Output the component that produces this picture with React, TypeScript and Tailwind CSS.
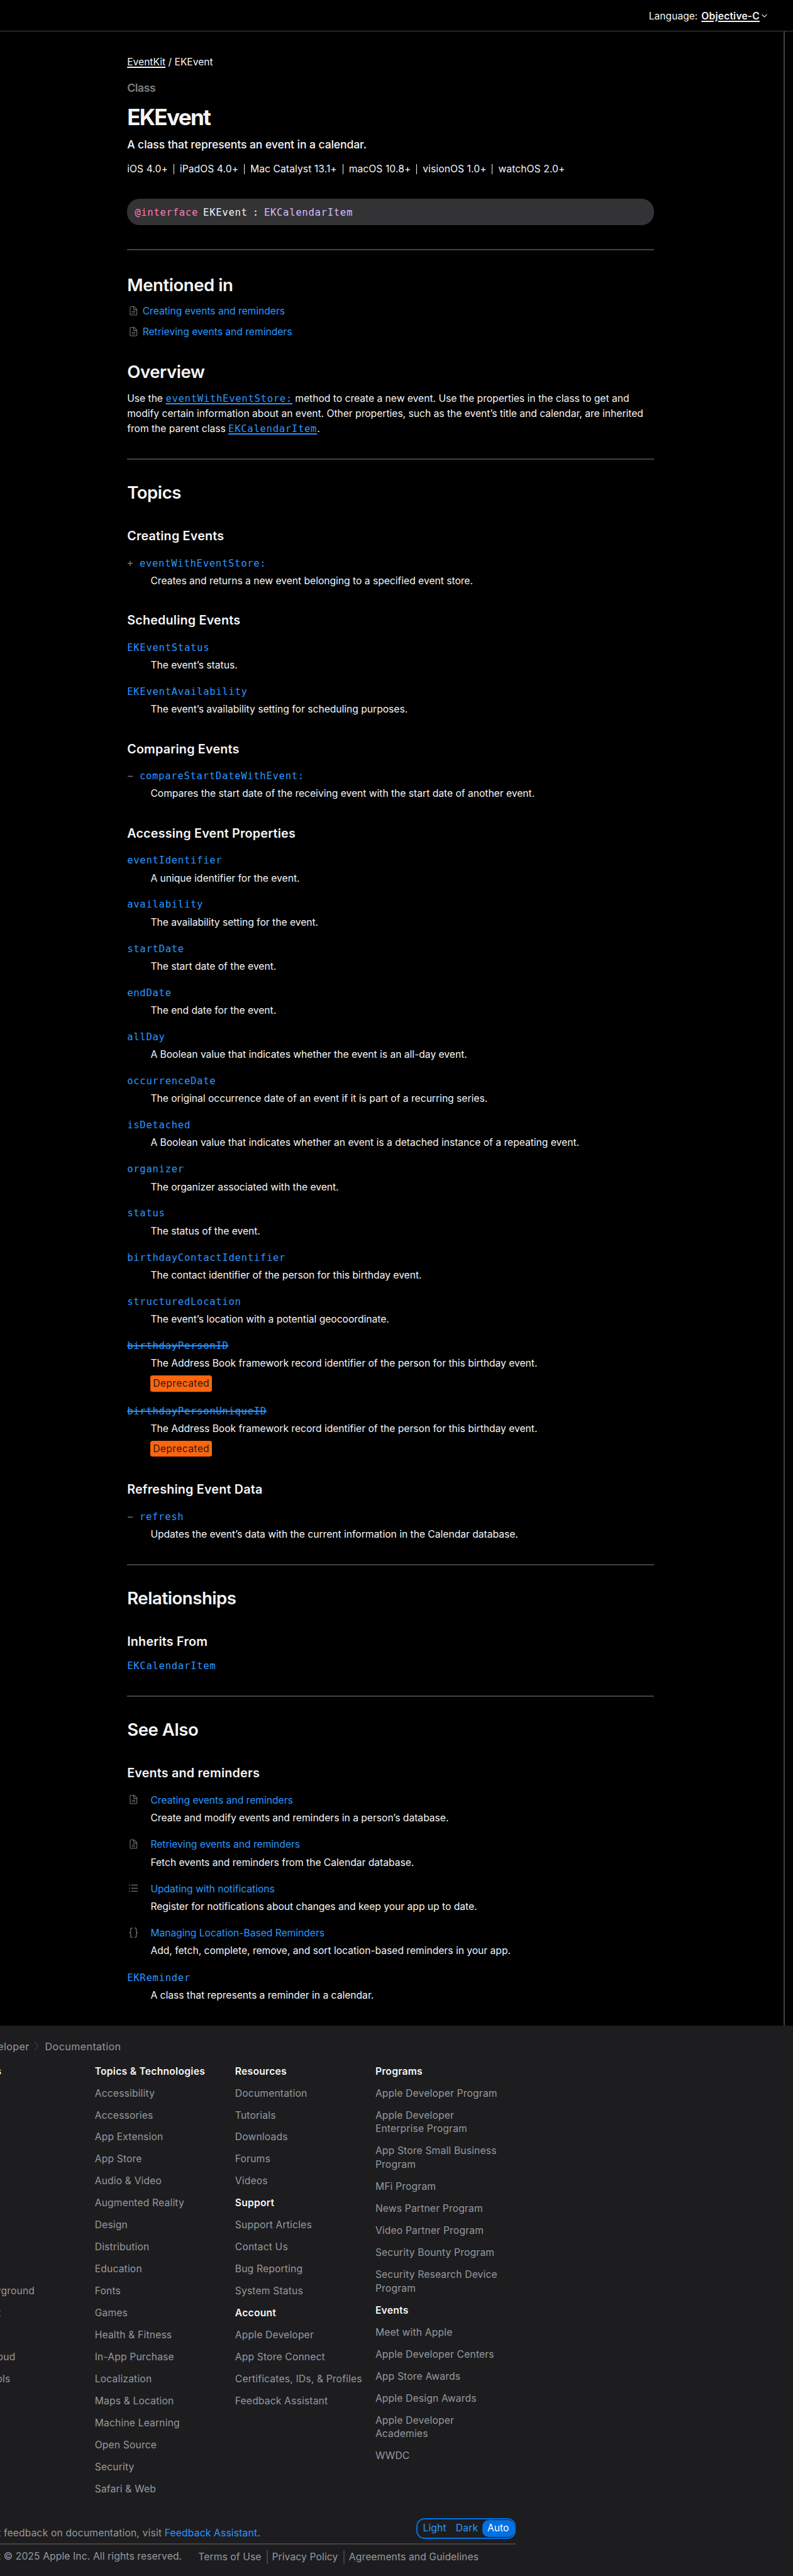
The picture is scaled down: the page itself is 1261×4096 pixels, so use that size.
import type { ReactNode } from "react";

type Item = {
  name: string;
  text: string;
  prefix?: string;
  deprecated?: boolean;
};

type Group = { title: string; items: Item[] };

const topics: Group[] = [
  {
    title: "Creating Events",
    items: [
      {
        prefix: "+",
        name: "eventWithEventStore:",
        text: "Creates and returns a new event belonging to a specified event store.",
      },
    ],
  },
  {
    title: "Scheduling Events",
    items: [
      { name: "EKEventStatus", text: "The event’s status." },
      {
        name: "EKEventAvailability",
        text: "The event’s availability setting for scheduling purposes.",
      },
    ],
  },
  {
    title: "Comparing Events",
    items: [
      {
        prefix: "−",
        name: "compareStartDateWithEvent:",
        text: "Compares the start date of the receiving event with the start date of another event.",
      },
    ],
  },
  {
    title: "Accessing Event Properties",
    items: [
      { name: "eventIdentifier", text: "A unique identifier for the event." },
      { name: "availability", text: "The availability setting for the event." },
      { name: "startDate", text: "The start date of the event." },
      { name: "endDate", text: "The end date for the event." },
      {
        name: "allDay",
        text: "A Boolean value that indicates whether the event is an all-day event.",
      },
      {
        name: "occurrenceDate",
        text: "The original occurrence date of an event if it is part of a recurring series.",
      },
      {
        name: "isDetached",
        text: "A Boolean value that indicates whether an event is a detached instance of a repeating event.",
      },
      { name: "organizer", text: "The organizer associated with the event." },
      { name: "status", text: "The status of the event." },
      {
        name: "birthdayContactIdentifier",
        text: "The contact identifier of the person for this birthday event.",
      },
      {
        name: "structuredLocation",
        text: "The event’s location with a potential geocoordinate.",
      },
      {
        name: "birthdayPersonID",
        text: "The Address Book framework record identifier of the person for this birthday event.",
        deprecated: true,
      },
      {
        name: "birthdayPersonUniqueID",
        text: "The Address Book framework record identifier of the person for this birthday event.",
        deprecated: true,
      },
    ],
  },
  {
    title: "Refreshing Event Data",
    items: [
      {
        prefix: "−",
        name: "refresh",
        text: "Updates the event’s data with the current information in the Calendar database.",
      },
    ],
  },
];

const platforms = [
  "iOS 4.0+",
  "iPadOS 4.0+",
  "Mac Catalyst 13.1+",
  "macOS 10.8+",
  "visionOS 1.0+",
  "watchOS 2.0+",
];

type Section = { heading: string; links: string[] };

const directory: Section[][] = [
  [
    {
      heading: "Platforms",
      links: ["iOS", "iPadOS", "macOS", "tvOS", "visionOS", "watchOS"],
    },
    {
      heading: "Tools",
      links: [
        "Swift",
        "SwiftUI",
        "Swift Playground",
        "TestFlight",
        "Xcode",
        "Xcode Cloud",
        "SF Symbols",
      ],
    },
  ],
  [
    {
      heading: "Topics & Technologies",
      links: [
        "Accessibility",
        "Accessories",
        "App Extension",
        "App Store",
        "Audio & Video",
        "Augmented Reality",
        "Design",
        "Distribution",
        "Education",
        "Fonts",
        "Games",
        "Health & Fitness",
        "In-App Purchase",
        "Localization",
        "Maps & Location",
        "Machine Learning",
        "Open Source",
        "Security",
        "Safari & Web",
      ],
    },
  ],
  [
    {
      heading: "Resources",
      links: ["Documentation", "Tutorials", "Downloads", "Forums", "Videos"],
    },
    {
      heading: "Support",
      links: ["Support Articles", "Contact Us", "Bug Reporting", "System Status"],
    },
    {
      heading: "Account",
      links: [
        "Apple Developer",
        "App Store Connect",
        "Certificates, IDs, & Profiles",
        "Feedback Assistant",
      ],
    },
  ],
  [
    {
      heading: "Programs",
      links: [
        "Apple Developer Program",
        "Apple Developer Enterprise Program",
        "App Store Small Business Program",
        "MFi Program",
        "News Partner Program",
        "Video Partner Program",
        "Security Bounty Program",
        "Security Research Device Program",
      ],
    },
    {
      heading: "Events",
      links: [
        "Meet with Apple",
        "Apple Developer Centers",
        "App Store Awards",
        "Apple Design Awards",
        "Apple Developer Academies",
        "WWDC",
      ],
    },
  ],
];

function DocIcon() {
  return (
    <svg
      viewBox="0 0 16 16"
      className="h-[14.6px] w-[14.6px] flex-none text-[#77777c]"
      fill="none"
      stroke="currentColor"
      strokeWidth="1.2"
      strokeLinejoin="round"
    >
      <path d="M3.9 0.6H9.2L13.9 5.3V13.6Q13.9 15.4 12.1 15.4H3.9Q2.1 15.4 2.1 13.6V2.4Q2.1 0.6 3.9 0.6Z" />
      <path d="M8.3 0.8V5.2Q8.3 6.2 9.3 6.2H13.7" />
      <path d="M4.9 9.3H11.1M4.9 12.1H11.1" />
    </svg>
  );
}

function ListIcon() {
  return (
    <svg
      viewBox="0 0 16 16"
      className="h-[14.6px] w-[14.6px] flex-none text-[#77777c]"
      stroke="currentColor"
      strokeWidth="1.4"
    >
      <path d="M0 2.7H1.9M0 8H1.9M0 13.3H1.9M4 2.7H16M4 8H16M4 13.3H16" />
    </svg>
  );
}

function BracesIcon() {
  return (
    <svg
      viewBox="0 0 16 18"
      className="h-[16.4px] w-[14.6px] flex-none text-[#77777c]"
      fill="none"
      stroke="currentColor"
      strokeWidth="1.4"
    >
      <path d="M6.3 0.7H5.6Q3.1 0.7 3.1 3V6.4Q3.1 9 0.6 9Q3.1 9 3.1 11.6V15Q3.1 17.3 5.6 17.3H6.3" />
      <path d="M9.7 0.7H10.4Q12.9 0.7 12.9 3V6.4Q12.9 9 15.4 9Q12.9 9 12.9 11.6V15Q12.9 17.3 10.4 17.3H9.7" />
    </svg>
  );
}

function Rule({ className }: { className: string }) {
  return <hr className={`h-[2px] border-0 bg-[#424245] ${className}`} />;
}

function H2({ className, children }: { className: string; children: ReactNode }) {
  return (
    <h2
      className={`text-[27.5px] leading-[36px] font-semibold tracking-[-0.015em] ${className}`}
    >
      {children}
    </h2>
  );
}

function H3({ className, children }: { className: string; children: ReactNode }) {
  return (
    <h3
      className={`text-[19.7px] leading-[28px] font-semibold tracking-[0.011em] ${className}`}
    >
      {children}
    </h3>
  );
}

function Code({ children, strike }: { children: ReactNode; strike?: boolean }) {
  return (
    <a
      className={
        strike
          ? "font-['DejaVu_Sans_Mono',monospace] text-[15.6px] tracking-[0.69px] text-[#2997ff] line-through decoration-2"
          : "font-['DejaVu_Sans_Mono',monospace] text-[15.6px] tracking-[0.69px] text-[#2997ff]"
      }
    >
      {children}
    </a>
  );
}

function InlineCode({ children }: { children: ReactNode }) {
  return (
    <a className="font-['DejaVu_Sans_Mono',monospace] text-[15.6px] leading-none tracking-[0.69px] text-[#2997ff] underline decoration-2 underline-offset-[2px]">
      {children}
    </a>
  );
}

function TopicItem({ item }: { item: Item }) {
  return (
    <div>
      <div className="flex h-[24px] font-['DejaVu_Sans_Mono',monospace] text-[15.6px] leading-[22.2px]">
        {item.prefix && (
          <span className="w-[19.7px] text-[#808084]">{item.prefix}</span>
        )}
        <Code strike={item.deprecated}>{item.name}</Code>
      </div>
      <p className="mt-[3.3px] pl-[37.2px]">{item.text}</p>
      {item.deprecated && (
        <span className="mt-[6.9px] mb-[1.3px] ml-[37.2px] flex h-[25.5px] w-[97.5px] items-center justify-center rounded-[3.5px] bg-[#ff650d] tracking-[0.024em] text-[#1d1d1f]">
          Deprecated
        </span>
      )}
    </div>
  );
}

function ArticleItem({
  icon,
  name,
  text,
}: {
  icon: ReactNode;
  name: string;
  text: string;
}) {
  return (
    <div>
      <div className="flex h-[24px]">
        <span className="flex h-[22px] w-[37.2px] items-center pl-[2.6px]">{icon}</span>
        <a className="text-[#2997ff]">{name}</a>
      </div>
      <p className="mt-[4.3px] pl-[37.2px]">{text}</p>
    </div>
  );
}

function MentionLink({ className, children }: { className: string; children: ReactNode }) {
  return (
    <div className={`flex h-[24px] ${className}`}>
      <span className="flex h-[22px] w-[24.5px] items-center pl-[2.6px]">
        <DocIcon />
      </span>
      <a className="text-[#2997ff]">{children}</a>
    </div>
  );
}

function Header() {
  return (
    <header className="flex h-[50px] items-center justify-end border-b border-[#424245] pt-[3px] pr-[41px]">
      <span>Language:</span>
      <span className="ml-[6px] font-semibold tracking-[0.012em] underline decoration-2 underline-offset-[2px]">
        Objective-C
      </span>
      <svg
        viewBox="0 0 9 6"
        className="ml-[3px] h-[6px] w-[9px] -translate-y-[1px]"
        fill="none"
        stroke="currentColor"
        strokeWidth="1.1"
      >
        <path d="M0.5 0.8L4.5 5L8.5 0.8" />
      </svg>
    </header>
  );
}

function Main() {
  return (
    <main className="h-[3171px] w-[1248px] border-r-2 border-[#424245] pt-[37.4px] pl-[202.2px]">
      <div className="w-[838.3px]">
        <nav>
          <a className="underline decoration-2 underline-offset-[2px]">EventKit</a> / EKEvent
        </nav>
        <p className="mt-[17px] text-[17.5px] font-semibold tracking-[-0.02em] text-[#808084]">
          Class
        </p>
        <h1 className="mt-[13.3px] text-[35.1px] leading-[40px] font-bold tracking-[-0.048em]">
          EKEvent
        </h1>
        <p className="mt-[12.3px] text-[17.5px] font-medium tracking-[-0.004em]">
          A class that represents an event in a calendar.
        </p>
        <ul className="mt-[15.3px] flex h-[24px] tracking-[0.006em]">
          {platforms.map((name, i) => (
            <li key={name} className="flex items-center">
              {i > 0 && <span className="mr-[9.1px] ml-[8.8px] h-[16px] w-px bg-[#f5f5f7]" />}
              {name}
            </li>
          ))}
        </ul>
        <div className="mt-[35px] flex h-[41.6px] items-center rounded-[20px] bg-[#333336] pt-[1.2px] pl-[12px]">
          <code className="font-['DejaVu_Sans_Mono',monospace] text-[15.6px] tracking-[0.69px] [word-spacing:-2px]">
            <span className="text-[#ff7ab2]">@interface</span> EKEvent :{" "}
            <span className="text-[#dabaff]">EKCalendarItem</span>
          </code>
        </div>

        <Rule className="mt-[38.5px]" />
        <H2 className="mt-[36.3px]">Mentioned in</H2>
        <MentionLink className="mt-[12.8px]">Creating events and reminders</MentionLink>
        <MentionLink className="mt-[8.8px]">Retrieving events and reminders</MentionLink>

        <H2 className="mt-[32.9px]">Overview</H2>
        <p className="mt-[13.3px] leading-[23.69px]">
          Use the <InlineCode>eventWithEventStore:</InlineCode> method to create a new
          event. Use the properties in the class to get and
          <br />
          modify certain information about an event. Other properties, such as the event’s
          title and calendar, are inherited
          <br />
          from the parent class <InlineCode>EKCalendarItem</InlineCode>.
        </p>

        <Rule className="mt-[35.5px]" />
        <H2 className="mt-[33.8px]">Topics</H2>
        <div className="mt-[37.3px] flex flex-col gap-[36.5px]">
          {topics.map((group) => (
            <section key={group.title}>
              <H3 className="mb-[18.4px]">{group.title}</H3>
              <div className="flex flex-col gap-[18.86px]">
                {group.items.map((item) => (
                  <TopicItem key={item.name} item={item} />
                ))}
              </div>
            </section>
          ))}
        </div>

        <Rule className="mt-[35.4px]" />
        <H2 className="mt-[33.5px]">Relationships</H2>
        <H3 className="mt-[36.7px]">Inherits From</H3>
        <div className="mt-[14px] flex h-[24px] leading-[22.2px]">
          <Code>EKCalendarItem</Code>
        </div>

        <Rule className="mt-[34.4px]" />
        <H2 className="mt-[33.8px]">See Also</H2>
        <H3 className="mt-[37px]">Events and reminders</H3>
        <div className="mt-[18px] flex flex-col gap-[18.2px]">
          <ArticleItem
            icon={<DocIcon />}
            name="Creating events and reminders"
            text="Create and modify events and reminders in a person’s database."
          />
          <ArticleItem
            icon={<DocIcon />}
            name="Retrieving events and reminders"
            text="Fetch events and reminders from the Calendar database."
          />
          <ArticleItem
            icon={<ListIcon />}
            name="Updating with notifications"
            text="Register for notifications about changes and keep your app up to date."
          />
          <ArticleItem
            icon={<BracesIcon />}
            name="Managing Location-Based Reminders"
            text="Add, fetch, complete, remove, and sort location-based reminders in your app."
          />
          <div className="pt-[1px]">
            <TopicItem
              item={{
                name: "EKReminder",
                text: "A class that represents a reminder in a calendar.",
              }}
            />
          </div>
        </div>
      </div>
    </main>
  );
}

function Footer() {
  return (
    <footer className="h-[875px] bg-[#1d1d1f] pt-[20.5px] tracking-[0.0115em] text-[#98989d]">
      <div className="ml-[-72.4px] w-[892.4px]">
        <nav className="flex h-[24px] items-center text-[16.1px] tracking-[0.025em]">
          <span className="w-[119.2px] text-right">Developer</span>
          <svg
            viewBox="0 0 8 18"
            className="ml-[7px] h-[17px] w-[7px] text-[#515154]"
            fill="none"
            stroke="currentColor"
            strokeWidth="1"
          >
            <path d="M1 0.5L7 9L1 17.5" />
          </svg>
          <span className="ml-[10.8px]">Documentation</span>
        </nav>

        <div className="mt-[17.1px] flex gap-[18.1px]">
          {directory.map((column) => (
            <div
              key={column[0].heading}
              className="flex w-[205px] flex-col gap-[13.09px] leading-[21.87px]"
            >
              {column.map((section) => (
                <section key={section.heading} className="flex flex-col gap-[13.09px]">
                  <h4 className="font-semibold tracking-[0.0175em] text-[#f5f5f7]">
                    {section.heading}
                  </h4>
                  {section.links.map((link) => (
                    <a key={link}>{link}</a>
                  ))}
                </section>
              ))}
            </div>
          ))}
        </div>

        <div className="mt-[35.3px] flex h-[33px] justify-between">
          <p className="pt-[11.8px] whitespace-nowrap">
            To submit feedback on documentation, visit{" "}
            <a className="text-[#2997ff]">Feedback Assistant</a>.
          </p>
          <div className="flex w-[158px] items-center rounded-[13px] border-2 border-[#0071e3] pr-[0.5px] pl-[8.4px] text-[#2997ff]">
            <span>Light</span>
            <span className="ml-[15px]">Dark</span>
            <span className="ml-auto flex h-[27.5px] w-[50.7px] items-center justify-center rounded-[10px] bg-[#0071e3] tracking-normal text-white">
              Auto
            </span>
          </div>
        </div>

        <hr className="mt-[7.4px] h-[2px] border-0 bg-[#424245]" />

        <div className="mt-[6.8px] flex h-[24px] whitespace-nowrap">
          <span className="w-[387.6px] tracking-[0.008em]">
            Copyright © 2025 Apple Inc. All rights reserved.
          </span>
          <div className="flex items-center pt-[2px] leading-[22px] tracking-[0.008em]">
            <a className="border-r-2 border-[#424245] pr-[8.8px]">Terms of Use</a>
            <a className="border-r-2 border-[#424245] pr-[9px] pl-[6px]">Privacy Policy</a>
            <a className="pl-[6.4px]">Agreements and Guidelines</a>
          </div>
        </div>
      </div>
    </footer>
  );
}

export default function App() {
  return (
    <div className="h-[4096px] w-[1261px] overflow-hidden bg-black font-['Inter',sans-serif] text-[15.62px] leading-[24px] text-[#f5f5f7]">
      <Header />
      <Main />
      <Footer />
    </div>
  );
}
